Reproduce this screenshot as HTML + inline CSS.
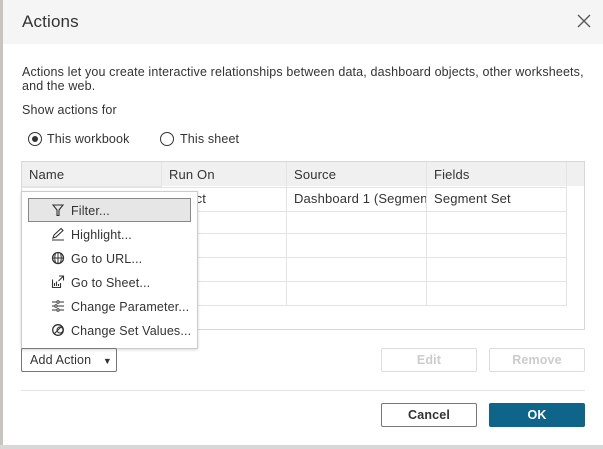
<!DOCTYPE html><html><head><style>
body{margin:0;width:603px;height:449px;background:#fff;font-family:"Liberation Sans",sans-serif;font-size:13px;color:#333;position:relative;overflow:hidden;letter-spacing:0.15px}
.a{position:absolute}
.hdr{left:3px;top:0;width:600px;height:44px;background:#f5f5f5}
.t{font-size:17px;color:#333}
.btn{position:absolute;box-sizing:border-box;border:1px solid #bbb;border-radius:2px;text-align:center;line-height:22px;font-size:12.5px;font-weight:bold}
.cell{position:absolute;box-sizing:border-box;border-right:1px solid #e4e4e4;border-bottom:1px solid #e4e4e4;padding-left:7px;line-height:25px;white-space:nowrap;overflow:hidden}
.mi{position:absolute;left:50px;font-size:12.5px}
</style></head><body>
<div class="a" style="left:0;top:0;width:3px;height:449px;background:#c8c4c2"></div>
<div class="a" style="left:0;top:445px;width:603px;height:4px;background:#d8d8d8"></div>
<div class="a hdr"></div>
<div class="a t" style="left:22px;top:12px">Actions</div>
<svg class="a" style="left:577px;top:14px" width="14" height="14"><path d="M1 1L13 13M13 1L1 13" stroke="#555" stroke-width="1.3"/></svg>
<div class="a" style="left:22px;top:65px;width:575px;line-height:14px;font-size:12.5px">Actions let you create interactive relationships between data, dashboard objects, other worksheets, and the web.</div>
<div class="a" style="left:22px;top:103px;font-size:12.5px">Show actions for</div>
<svg class="a" style="left:27px;top:131px" width="16" height="16"><circle cx="8" cy="8" r="6.5" fill="none" stroke="#333"/><circle cx="8" cy="8" r="3" fill="#333"/></svg>
<div class="a" style="left:47px;top:132px;font-size:12.5px">This workbook</div>
<svg class="a" style="left:159px;top:131px" width="16" height="16"><circle cx="8" cy="8" r="6.5" fill="none" stroke="#333"/></svg>
<div class="a" style="left:180px;top:132px;font-size:12.5px">This sheet</div>
<div class="a" style="left:21px;top:161px;width:564px;height:169px;box-sizing:border-box;border:1px solid #d8d8d8"></div>
<div class="a" style="left:22px;top:162px;width:562px;height:24px;background:#f0f0f0"></div>
<div class="cell" style="left:22px;top:162px;width:140px">Name</div>
<div class="cell" style="left:162px;top:162px;width:125px">Run On</div>
<div class="cell" style="left:287px;top:162px;width:140px">Source</div>
<div class="cell" style="left:427px;top:162px;width:140px">Fields</div>
<div class="cell" style="left:162px;top:186px;width:125px">Select</div>
<div class="cell" style="left:287px;top:186px;width:140px">Dashboard 1 (Segment Pie)</div>
<div class="cell" style="left:427px;top:186px;width:140px">Segment Set</div>
<div class="cell" style="left:22px;top:186px;width:140px"></div>
<div class="cell" style="left:22px;top:210px;width:140px;height:24px"></div><div class="cell" style="left:162px;top:210px;width:125px;height:24px"></div><div class="cell" style="left:287px;top:210px;width:140px;height:24px"></div><div class="cell" style="left:427px;top:210px;width:140px;height:24px"></div>
<div class="cell" style="left:22px;top:234px;width:140px;height:24px"></div><div class="cell" style="left:162px;top:234px;width:125px;height:24px"></div><div class="cell" style="left:287px;top:234px;width:140px;height:24px"></div><div class="cell" style="left:427px;top:234px;width:140px;height:24px"></div>
<div class="cell" style="left:22px;top:258px;width:140px;height:24px"></div><div class="cell" style="left:162px;top:258px;width:125px;height:24px"></div><div class="cell" style="left:287px;top:258px;width:140px;height:24px"></div><div class="cell" style="left:427px;top:258px;width:140px;height:24px"></div>
<div class="cell" style="left:22px;top:282px;width:140px;height:24px"></div><div class="cell" style="left:162px;top:282px;width:125px;height:24px"></div><div class="cell" style="left:287px;top:282px;width:140px;height:24px"></div><div class="cell" style="left:427px;top:282px;width:140px;height:24px"></div>
<div class="a" style="left:21px;top:191px;width:177px;height:158px;box-sizing:border-box;background:#fff;border:1px solid #ccc;box-shadow:0 1px 3px rgba(0,0,0,.15)"></div>
<div class="a" style="left:28px;top:198px;width:163px;height:24px;box-sizing:border-box;background:#e6e6e6;border:1px solid #888"></div>
<svg class="a" style="left:51px;top:203px" width="14" height="14"><path d="M2 2H12L8 7V12.5H6V7Z" fill="none" stroke="#333" stroke-width="1.1"/></svg>
<div class="mi" style="left:71px;top:204px">Filter...</div>
<svg class="a" style="left:51px;top:227px" width="14" height="14"><path d="M2 11L3 8L10 1.5L12 3.5L5 10Z M1 13H13" fill="none" stroke="#333" stroke-width="1.1"/></svg>
<div class="mi" style="left:71px;top:228px">Highlight...</div>
<svg class="a" style="left:51px;top:251px" width="14" height="14"><circle cx="7" cy="7" r="5.5" fill="none" stroke="#333" stroke-width="1.3"/><path d="M1.5 7H12.5M7 1.5V12.5M4.5 2.5Q3 7 4.5 11.5M9.5 2.5Q11 7 9.5 11.5" fill="none" stroke="#333"/></svg>
<div class="mi" style="left:71px;top:252px">Go to URL...</div>
<svg class="a" style="left:51px;top:275px" width="14" height="14"><path d="M1.5 4.5V12.5H9.5V8M3.5 11V8M5.5 11V6.5M7.5 11V9M8 1H12.5V5.5M12.5 1L7.5 6" fill="none" stroke="#333" stroke-width="1.1"/></svg>
<div class="mi" style="left:71px;top:276px">Go to Sheet...</div>
<svg class="a" style="left:51px;top:299px" width="14" height="14"><path d="M1 3H5M9 3H13M1 7H3M7 7H13M1 11H5M9 11H13" stroke="#333"/><circle cx="7" cy="3" r="1.3" fill="none" stroke="#333"/><circle cx="5" cy="7" r="1.3" fill="none" stroke="#333"/><circle cx="7" cy="11" r="1.3" fill="none" stroke="#333"/></svg>
<div class="mi" style="left:71px;top:300px">Change Parameter...</div>
<svg class="a" style="left:51px;top:323px" width="14" height="14"><circle cx="7" cy="7" r="5.3" fill="none" stroke="#333" stroke-width="1.3"/><circle cx="9" cy="7" r="3" fill="none" stroke="#333" stroke-width="1.1"/><path d="M3 11L11 3" stroke="#333" stroke-width="1.1"/></svg>
<div class="mi" style="left:71px;top:324px">Change Set Values...</div>
<div class="btn" style="left:21px;top:348px;width:96px;height:24px;border-color:#777;font-weight:normal;text-align:left;padding-left:8px">Add Action <span style="font-size:9px;margin-left:8px">▼</span></div>
<div class="btn" style="left:381px;top:348px;width:96px;height:24px;color:#ccc;border-color:#ddd">Edit</div>
<div class="btn" style="left:489px;top:348px;width:96px;height:24px;color:#ccc;border-color:#ddd">Remove</div>
<div class="a" style="left:21px;top:390px;width:564px;height:1px;background:#e4e4e4"></div>
<div class="btn" style="left:381px;top:403px;width:96px;height:24px;border-color:#777;color:#333">Cancel</div>
<div class="btn" style="left:489px;top:403px;width:96px;height:24px;border:none;background:#0f6489;color:#fff;line-height:24px">OK</div>
</body></html>
